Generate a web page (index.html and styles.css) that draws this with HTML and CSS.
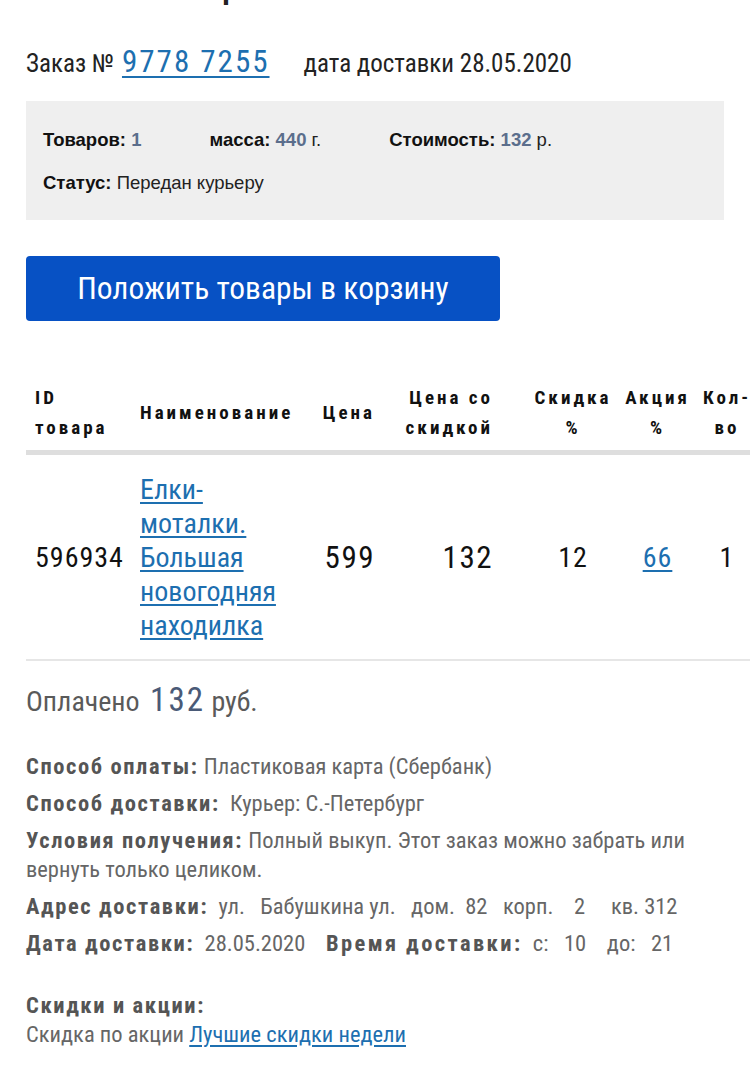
FILE: index.html
```html
<!DOCTYPE html>
<html lang="ru">
<head>
<meta charset="utf-8">
<title>Заказ 9778 7255</title>
<link rel="stylesheet" href="styles.css">
</head>
<body>
<main class="page">
  <h1 class="title">Заказ отправлен</h1>

  <div class="order-head">
    <span class="order-label">Заказ №</span>
    <a class="order-num" href="#">9778 7255</a>
    <span class="order-date">дата доставки 28.05.2020</span>
  </div>

  <section class="summary">
    <div class="summary-row">
      <span class="summary-item"><b>Товаров:</b> <span class="summary-val">1</span></span>
      <span class="summary-item"><b>масса:</b> <span class="summary-val">440</span> г.</span>
      <span class="summary-item"><b>Стоимость:</b> <span class="summary-val">132</span> р.</span>
    </div>
    <div class="summary-row">
      <span class="summary-item"><b>Статус:</b> Передан курьеру</span>
    </div>
  </section>

  <button class="cart-btn" type="button">Положить товары в корзину</button>

  <div class="table-wrap">
    <table class="goods">
      <colgroup>
        <col class="c-id"><col class="c-name"><col class="c-price"><col class="c-disc-price"><col class="c-disc"><col class="c-promo"><col class="c-qty">
      </colgroup>
      <thead>
        <tr>
          <th class="t-left">ID<br>товара</th>
          <th class="t-left t-name">Наименование</th>
          <th class="t-right">Цена</th>
          <th class="t-right t-dp">Цена со<br>скидкой</th>
          <th class="t-center">Скидка<br>%</th>
          <th class="t-center">Акция<br>%</th>
          <th class="t-center t-qty">Кол-<br>во</th>
        </tr>
      </thead>
      <tbody>
        <tr>
          <td class="t-left num-sm">596934</td>
          <td class="t-left t-name"><a class="goods-link" href="#">Елки-моталки. Большая новогодняя находилка</a></td>
          <td class="t-right num-lg">599</td>
          <td class="t-right t-dp num-lg">132</td>
          <td class="t-center num-sm">12</td>
          <td class="t-center num-sm"><a class="goods-link" href="#">66</a></td>
          <td class="t-center t-qty num-sm">1</td>
        </tr>
      </tbody>
    </table>
  </div>

  <p class="paid">Оплачено <span class="paid-sum">132</span> руб.</p>

  <div class="details">
    <p class="d-row"><span class="d-label">Способ оплаты:</span> Пластиковая карта (Сбербанк)</p>
    <p class="d-row"><span class="d-label">Способ доставки:</span>&nbsp; Курьер: С.-Петербург</p>
    <p class="d-row"><span class="d-label">Условия получения:</span> Полный выкуп. Этот заказ можно забрать или вернуть только целиком.</p>
    <p class="d-row"><span class="d-label">Адрес доставки:</span>&nbsp; ул.&nbsp;&nbsp; Бабушкина ул.&nbsp;&nbsp; дом.&nbsp; 82&nbsp;&nbsp; корп.&nbsp;&nbsp;&nbsp; 2&nbsp;&nbsp;&nbsp;&nbsp; кв. 312</p>
    <p class="d-row"><span class="d-label">Дата доставки:</span>&nbsp; 28.05.2020&nbsp;&nbsp;&nbsp; <span class="d-label d-wide">Время доставки:</span>&nbsp; с:&nbsp;&nbsp; 10&nbsp;&nbsp;&nbsp; до:&nbsp;&nbsp; 21</p>
  </div>

  <div class="promo">
    <p class="d-row"><span class="d-label">Скидки и акции:</span></p>
    <p class="d-row">Скидка по акции <a class="promo-link" href="#">Лучшие скидки недели</a></p>
  </div>
</main>
</body>
</html>
```
FILE: styles.css
```css
html, body {
  margin: 0;
  padding: 0;
  overflow-x: hidden;
  background: #fff;
}

body {
  font-family: "Roboto Condensed", "Liberation Sans Narrow", "Open Sans", sans-serif;
  color: #222;
}

.page {
  padding: 0 26px 40px;
}

.title {
  margin: -47px 0 0;
  font-size: 48px;
  line-height: 52px;
  font-weight: 400;
  color: #222;
}

/* order header */
.order-head {
  display: flex;
  align-items: baseline;
  padding-top: 38px;
  padding-bottom: 21px;
}
.order-label {
  font-size: 25px;
  color: #222;
}
.order-num {
  margin-left: 8px;
  font-size: 31px;
  letter-spacing: 2px;
  color: #1d6fb0;
  text-decoration: underline;
  text-decoration-thickness: 2px;
  text-underline-offset: 4px;
}
.order-date {
  margin-left: 34px;
  font-size: 25px;
  color: #222;
}

/* summary box */
.summary {
  background: #efefef;
  padding: 28px 17px 26px;
  font-family: "Liberation Sans", Arial, sans-serif;
  font-size: 18.5px;
  line-height: 22px;
  color: #222;
}
.summary-row {
  display: flex;
  gap: 68px;
}
.summary-row + .summary-row {
  margin-top: 21px;
}
.summary-item b {
  font-weight: 700;
  color: #111;
}
.summary-val {
  font-weight: 700;
  color: #5b6e8c;
}

/* button */
.cart-btn {
  display: block;
  margin-top: 36px;
  width: 474px;
  height: 65px;
  border: 0;
  border-radius: 4px;
  background: #0751c4;
  color: #fff;
  font-family: inherit;
  font-size: 31.5px;
  cursor: pointer;
}

/* table */
.table-wrap {
  margin-top: 52px;
}
.goods {
  border-collapse: collapse;
  table-layout: fixed;
  width: 731px;
}
.c-id { width: 114px; }
.c-name { width: 170px; }
.c-price { width: 74px; }
.c-disc-price { width: 144px; }
.c-disc { width: 90px; }
.c-promo { width: 79px; }
.c-qty { width: 60px; }

.goods th {
  padding: 10px 9px 7px;
  font-size: 19px;
  line-height: 30px;
  font-weight: 700;
  letter-spacing: 3px;
  color: #111;
  vertical-align: middle;
  border-bottom: 5px solid #dedede;
  white-space: nowrap;
}
.goods td {
  padding: 18px 9px 16px;
  font-size: 28px;
  line-height: 34px;
  color: #111;
  vertical-align: middle;
  border-bottom: 2px solid #e6e6e6;
}
.goods .t-left { text-align: left; }
.goods .t-right { text-align: right; }
.goods .t-center { text-align: center; padding-left: 0; padding-right: 0; }
.goods .t-name { padding-left: 0; padding-right: 10px; }
.goods .t-dp { padding-right: 35px; }
.goods .t-qty { padding-right: 0; }

.goods .num-sm { font-size: 28px; letter-spacing: 1px; }
.goods .num-lg { font-size: 31px; letter-spacing: 1.5px; }

.goods-link {
  color: #1d6fb0;
  text-decoration: underline;
  text-underline-offset: 3px;
}

/* paid */
.paid {
  margin: 19px 0 0;
  font-size: 28px;
  line-height: 40px;
  color: #5a5a5a;
}
.paid-sum {
  margin-left: 4px;
  font-size: 33px;
  letter-spacing: 2px;
  color: #4a5a77;
}

/* details */
.details {
  margin-top: 30px;
}
.d-row {
  margin: 0 0 8px;
  font-size: 22.5px;
  line-height: 29px;
  color: #666;
}
.d-label {
  font-weight: 700;
  letter-spacing: 1.6px;
  color: #555;
}
.d-wide {
  letter-spacing: 2.4px;
}
.promo {
  margin-top: 33px;
}
.promo .d-row {
  margin: 0;
}
.promo-link {
  color: #1d6fb0;
  text-decoration: underline;
  text-underline-offset: 3px;
}
```
